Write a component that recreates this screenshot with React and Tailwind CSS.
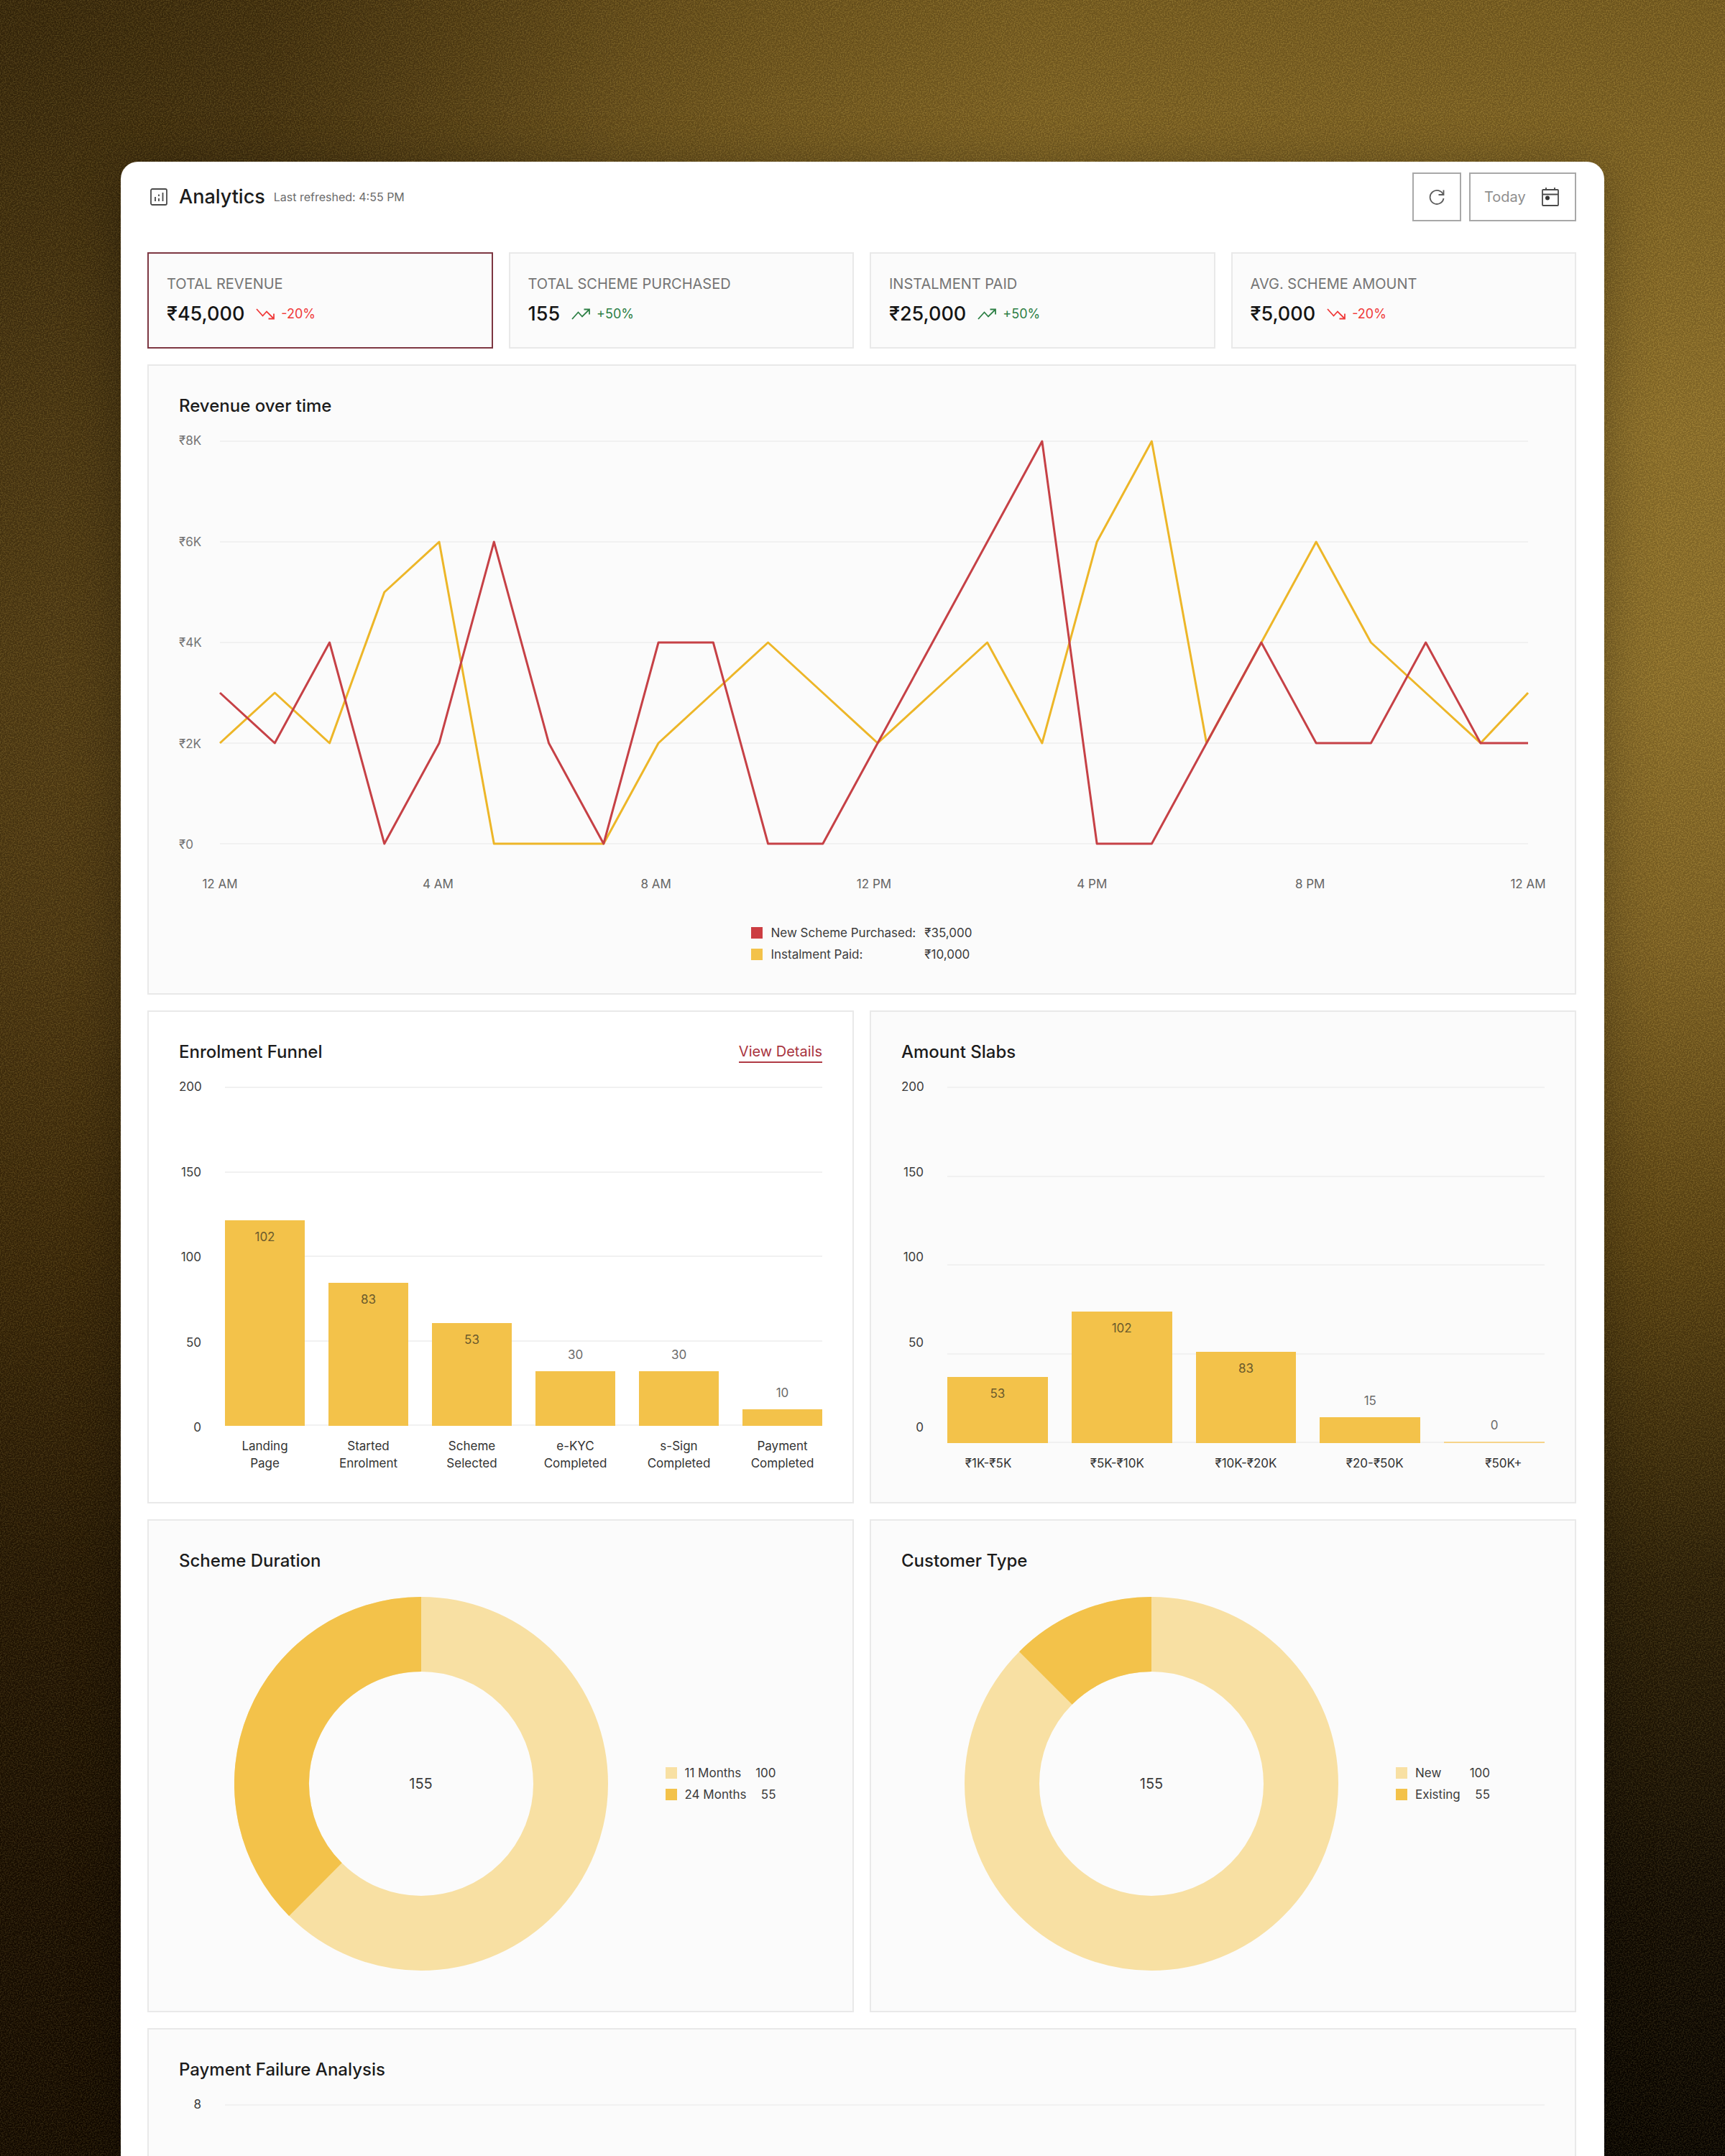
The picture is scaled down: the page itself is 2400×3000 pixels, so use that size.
import React from 'react';

const stats = [
  { label: 'TOTAL REVENUE', value: '₹45,000', change: '-20%', up: false, selected: true },
  { label: 'TOTAL SCHEME PURCHASED', value: '155', change: '+50%', up: true },
  { label: 'INSTALMENT PAID', value: '₹25,000', change: '+50%', up: true },
  { label: 'AVG. SCHEME AMOUNT', value: '₹5,000', change: '-20%', up: false }
];

// Hourly values in thousands of rupees
const schemeSeries = [3, 2, 4, 0, 2, 6, 2, 0, 4, 4, 0, 0, 2, 4, 6, 8, 0, 0, 2, 4, 2, 2, 4, 2, 2];
const instalmentSeries = [2, 3, 2, 5, 6, 0, 0, 0, 2, 3, 4, 3, 2, 3, 4, 2, 6, 8, 2, 4, 6, 4, 3, 2, 3];
const hours = ['12 AM', '4 AM', '8 AM', '12 PM', '4 PM', '8 PM', '12 AM'];

const funnelBars = [
  { label: 'Landing Page', value: 102, height: 286 },
  { label: 'Started Enrolment', value: 83, height: 199 },
  { label: 'Scheme Selected', value: 53, height: 143 },
  { label: 'e-KYC Completed', value: 30, height: 76 },
  { label: 's-Sign Completed', value: 30, height: 76 },
  { label: 'Payment Completed', value: 10, height: 23 }
];

const slabBars = [
  { label: '₹1K-₹5K', value: 53, height: 92 },
  { label: '₹5K-₹10K', value: 102, height: 183 },
  { label: '₹10K-₹20K', value: 83, height: 127 },
  { label: '₹20-₹50K', value: 15, height: 36 },
  { label: '₹50K+', value: 0, height: 2 }
];

const countTicks = [200, 150, 100, 50, 0];

const AnalyticsIcon = () => (
  <svg viewBox="0 0 24 24" className="h-6 w-6 shrink-0" fill="none" stroke="#4a4a4a" strokeWidth="1.8" aria-hidden="true">
    <rect x="1" y="1" width="22" height="22" rx="2" />
    <path d="M7 12v6M12 8.5v2.5M12 14v4M17.5 6v12" />
  </svg>
);

const RefreshIcon = () => (
  <svg viewBox="0 0 22 22" className="h-[22px] w-[22px]" fill="none" stroke="#5c5c5c" strokeWidth="1.8" aria-hidden="true">
    <path d="M20.5 1.5v6.5h-7" />
    <path d="M20 8A9.5 9.5 0 1 0 20.5 13" />
  </svg>
);

const CalendarIcon = () => (
  <svg viewBox="0 0 24 28" className="h-7 w-6" fill="none" stroke="#4a4a4a" strokeWidth="1.8" aria-hidden="true">
    <rect x="1" y="4" width="22" height="22" rx="1" />
    <path d="M1 10.5h22M6 1v3M18 1v3" />
    <circle cx="8" cy="15.5" r="3" fill="#333333" stroke="none" />
  </svg>
);

const TrendIcon = ({ up }) => (
  <svg viewBox="0 0 26 16" className="h-4 w-[26px]" fill="none" stroke="currentColor" strokeWidth="1.8" aria-hidden="true">
    {up ? (
      <path d="M1 15L9.5 5.5L15 11.5L24.5 2M17.5 1.5H25V8.5" />
    ) : (
      <path d="M1 1L9.5 10.5L15 4.5L24.5 14M17.5 14.5H25V7.5" />
    )}
  </svg>
);

const StatCard = ({ stat }) => (
  <button
    type="button"
    aria-pressed={!!stat.selected}
    className={`border-2 bg-[#fbfbfb] px-[25px] py-7 text-left ${stat.selected ? 'border-[#7d3742]' : 'border-[#e9e9e9]'}`}
  >
    <span className="block text-[20px] leading-7 text-[#757575]">{stat.label}</span>
    <span className="mt-[10px] flex items-center leading-9">
      <span className="text-[27px] font-medium text-[#151515]">{stat.value}</span>
      <span className={`ml-4 flex items-center gap-[9px] text-[18px] ${stat.up ? 'text-[#2e8046]' : 'text-[#f03a3a]'}`}>
        <TrendIcon up={stat.up} />
        {stat.change}
      </span>
    </span>
  </button>
);

const Card = ({ title, action, className = 'bg-[#fbfbfb]', children }) => (
  <section className={`border-2 border-[#e9e9e9] p-[42px] ${className}`}>
    <div className="flex h-7 items-center justify-between">
      <h2 className="text-[24px] leading-7 font-medium text-[#1c1c1c]">{title}</h2>
      {action}
    </div>
    {children}
  </section>
);

const GridLines = ({ count }) => (
  <div className="col-start-1 row-start-1 flex flex-col justify-between">
    {Array.from({ length: count }, (_, i) => (
      <div key={i} className="h-[2px] bg-[#f1f1f1]"></div>
    ))}
  </div>
);

const CountAxis = ({ ticks }) => (
  <div className="-my-3 flex h-[498px] w-[31px] shrink-0 flex-col justify-between text-right text-[17px] leading-6 text-[#3c3c3c]">
    {ticks.map((tick) => (
      <span key={tick}>{tick}</span>
    ))}
  </div>
);

const BarChart = ({ bars, plotClass, labelClass }) => (
  <div className="mt-[34px] flex items-start gap-[33px]">
    <CountAxis ticks={countTicks} />
    <div className="min-w-0 flex-1">
      <div className={`grid ${plotClass}`}>
        <GridLines count={5} />
        <div className="col-start-1 row-start-1 flex items-end gap-[33px]">
          {bars.map((bar) => {
            const inside = bar.height > 80;
            return (
              <div key={bar.label} className="flex-1 text-center text-[17px] leading-6 text-[#6b6b6b]">
                {!inside && <div className="mb-[11px]">{bar.value}</div>}
                <div
                  className={`text-[#6b5a2c] ${inside ? 'pt-[11px]' : ''} ${bar.value === 0 ? 'bg-[#f6d48a]' : 'bg-[#f3c24a]'}`}
                  style={{ height: bar.height }}
                >
                  {inside && bar.value}
                </div>
              </div>
            );
          })}
        </div>
      </div>
      <div className={`mt-4 grid text-center text-[17px] leading-6 text-[#333333] ${labelClass}`}>
        {bars.map((bar) => (
          <span key={bar.label} className="px-2">{bar.label}</span>
        ))}
      </div>
    </div>
  </div>
);

const toPoints = (series) =>
  series.map((value, i) => `${i === 24 ? 1821 : i * 76.3},${561 - value * 70}`).join(' ');

const RevenueChart = () => (
  <>
    <div className="mt-[34px] flex items-start">
      <div className="-my-3 flex h-[586px] w-[57px] shrink-0 flex-col justify-between text-[17px] leading-6 text-[#757575]">
        {['₹8K', '₹6K', '₹4K', '₹2K', '₹0'].map((tick) => (
          <span key={tick}>{tick}</span>
        ))}
      </div>
      <div className="mr-[23px] min-w-0 flex-1">
        <div className="grid h-[562px]">
          <GridLines count={5} />
          <svg
            viewBox="0 0 1821 562"
            preserveAspectRatio="none"
            className="col-start-1 row-start-1 h-[562px] w-full overflow-visible"
            fill="none"
            strokeWidth="3"
            strokeLinejoin="round"
            role="img"
            aria-label="Revenue over time"
          >
            <polyline points={toPoints(instalmentSeries)} stroke="#edb628" vectorEffect="non-scaling-stroke" />
            <polyline points={toPoints(schemeSeries)} stroke="#c64146" vectorEffect="non-scaling-stroke" />
          </svg>
        </div>
        <div className="mt-[43px] flex justify-between text-[17px] leading-6 text-[#666666]">
          {hours.map((hour, i) => (
            <span key={i} className="flex w-0 justify-center whitespace-nowrap">{hour}</span>
          ))}
        </div>
      </div>
    </div>
    <div className="mt-11 flex justify-center">
      <div className="grid grid-cols-[auto_auto] gap-x-3 gap-y-[6px] text-[17px] leading-6 text-[#3c3c3c]">
        <span className="flex items-center gap-[11px]">
          <i className="h-4 w-4 bg-[#cc3d42]"></i>New Scheme Purchased:
        </span>
        <span>₹35,000</span>
        <span className="flex items-center gap-[11px]">
          <i className="h-4 w-4 bg-[#f3c24a]"></i>Instalment Paid:
        </span>
        <span>₹10,000</span>
      </div>
    </div>
  </>
);

const DonutChart = ({ total, path, rows, legendClass }) => (
  <div className="mt-9 mb-[14px] flex items-center justify-center gap-20 pl-3">
    <div className="grid h-[520px] w-[520px] shrink-0 place-items-center">
      <svg viewBox="0 0 520 520" className="col-start-1 row-start-1 h-full w-full" aria-hidden="true">
        <circle cx="260" cy="260" r="208" fill="none" stroke="#f8e0a3" strokeWidth="104" />
        <path d={path} fill="none" stroke="#f3c24a" strokeWidth="104" />
      </svg>
      <span className="col-start-1 row-start-1 text-[20px] leading-7 text-[#3c3c3c]">{total}</span>
    </div>
    <div className={`flex shrink-0 flex-col gap-[6px] text-[17px] leading-6 text-[#3c3c3c] ${legendClass}`}>
      {rows.map((row) => (
        <div key={row.label} className="flex items-center gap-[11px]">
          <i className={`h-4 w-4 ${row.color}`}></i>
          <span>{row.label}</span>
          <span className="ml-auto">{row.value}</span>
        </div>
      ))}
    </div>
  </div>
);

const Backdrop = () => (
  <div className="absolute inset-0 -z-10 overflow-hidden bg-[linear-gradient(to_bottom,#785d21_0%,#8f712c_20%,#8f712c_32%,#806325_44%,#5b4313_58%,#2c1f08_73%,#120b03_88%,#080401_100%)]">
    <div className="absolute inset-0 bg-[linear-gradient(to_right,rgba(30,15,0,0.540)_0%,rgba(30,15,0,0.500)_15%,rgba(30,15,0,0.120)_45%,rgba(30,15,0,0)_60%)]"></div>
    <div className="absolute inset-0 bg-[radial-gradient(ellipse_at_0%_0%,rgba(16,10,0,0.300)_0%,rgba(16,10,0,0)_26%)]"></div>
    {/* Film grain */}
    <svg className="absolute inset-0 h-full w-full opacity-10" aria-hidden="true">
      <filter id="grain" colorInterpolationFilters="sRGB">
        <feTurbulence type="fractalNoise" baseFrequency="0.55" numOctaves="2" stitchTiles="stitch" />
        <feColorMatrix type="matrix" values="3.6 0 0 0 -1.4  3 0 0 0 -1.15  1.6 0 0 0 -0.65  0 0 0 0 1" />
      </filter>
      <rect width="100%" height="100%" filter="url(#grain)" />
    </svg>
  </div>
);

const App = () => {
  return (
    <div className="relative isolate flex min-h-screen flex-col px-[7%] pt-[225px] font-['Inter',sans-serif]">
      <Backdrop />
      <main className="flex flex-1 flex-col gap-[22px] rounded-t-[24px] bg-white pt-[15px] pr-[39px] pl-[37px] shadow-[0_10px_70px_rgba(0,0,0,0.300)]">
        <header className="mb-[21px] flex h-[68px] items-center justify-between">
          <div className="flex items-center pl-1">
            <AnalyticsIcon />
            <h1 className="ml-4 text-[27px] leading-9 font-medium text-[#1c1c1c]">Analytics</h1>
            <span className="ml-3 text-[16px] leading-6 text-[#6b6b6b]">Last refreshed: 4:55 PM</span>
          </div>
          <div className="flex gap-[11px]">
            <button type="button" aria-label="Refresh" className="flex h-[68px] w-[68px] items-center justify-center border-2 border-[#a8a8a8]">
              <RefreshIcon />
            </button>
            <button type="button" className="flex h-[68px] w-[149px] items-center justify-between border-2 border-[#a8a8a8] pr-[22px] pl-[19px] text-[20px] text-[#8f8f8f]">
              Today
              <CalendarIcon />
            </button>
          </div>
        </header>

        <div className="grid grid-cols-4 gap-[22px]">
          {stats.map((stat) => (
            <StatCard key={stat.label} stat={stat} />
          ))}
        </div>

        <Card title="Revenue over time">
          <RevenueChart />
        </Card>

        <div className="grid grid-cols-2 gap-[22px]">
          <Card
            title="Enrolment Funnel"
            className="bg-white"
            action={
              <a href="#funnel" className="border-b-2 border-[#b03a45] text-[20px] leading-7 text-[#a93440]">
                View Details
              </a>
            }
          >
            <BarChart bars={funnelBars} plotClass="h-[472px]" labelClass="grid-cols-6 gap-x-[33px]" />
          </Card>
          <Card title="Amount Slabs">
            <BarChart bars={slabBars} plotClass="h-[496px]" labelClass="-mx-4 grid-cols-5 gap-x-[33px]" />
          </Card>
        </div>

        <div className="grid grid-cols-2 gap-[22px]">
          <Card title="Scheme Duration">
            <DonutChart
              total={155}
              path="M260 52A208 208 0 0 0 112.9 407.1"
              legendClass="w-[154px]"
              rows={[
                { label: '11 Months', value: 100, color: 'bg-[#f8e0a3]' },
                { label: '24 Months', value: 55, color: 'bg-[#f3c24a]' }
              ]}
            />
          </Card>
          <Card title="Customer Type">
            <DonutChart
              total={155}
              path="M260 52A208 208 0 0 0 112.9 112.9"
              legendClass="w-[131px]"
              rows={[
                { label: 'New', value: 100, color: 'bg-[#f8e0a3]' },
                { label: 'Existing', value: 55, color: 'bg-[#f3c24a]' }
              ]}
            />
          </Card>
        </div>

        <Card title="Payment Failure Analysis" className="flex-1 border-b-0 bg-[#fbfbfb]">
          <div className="mt-[34px] flex items-start gap-[33px]">
            <span className="-my-3 w-[31px] text-right text-[17px] leading-6 text-[#3c3c3c]">8</span>
            <div className="h-[2px] flex-1 bg-[#f1f1f1]"></div>
          </div>
        </Card>
      </main>
    </div>
  );
};

export default App;
